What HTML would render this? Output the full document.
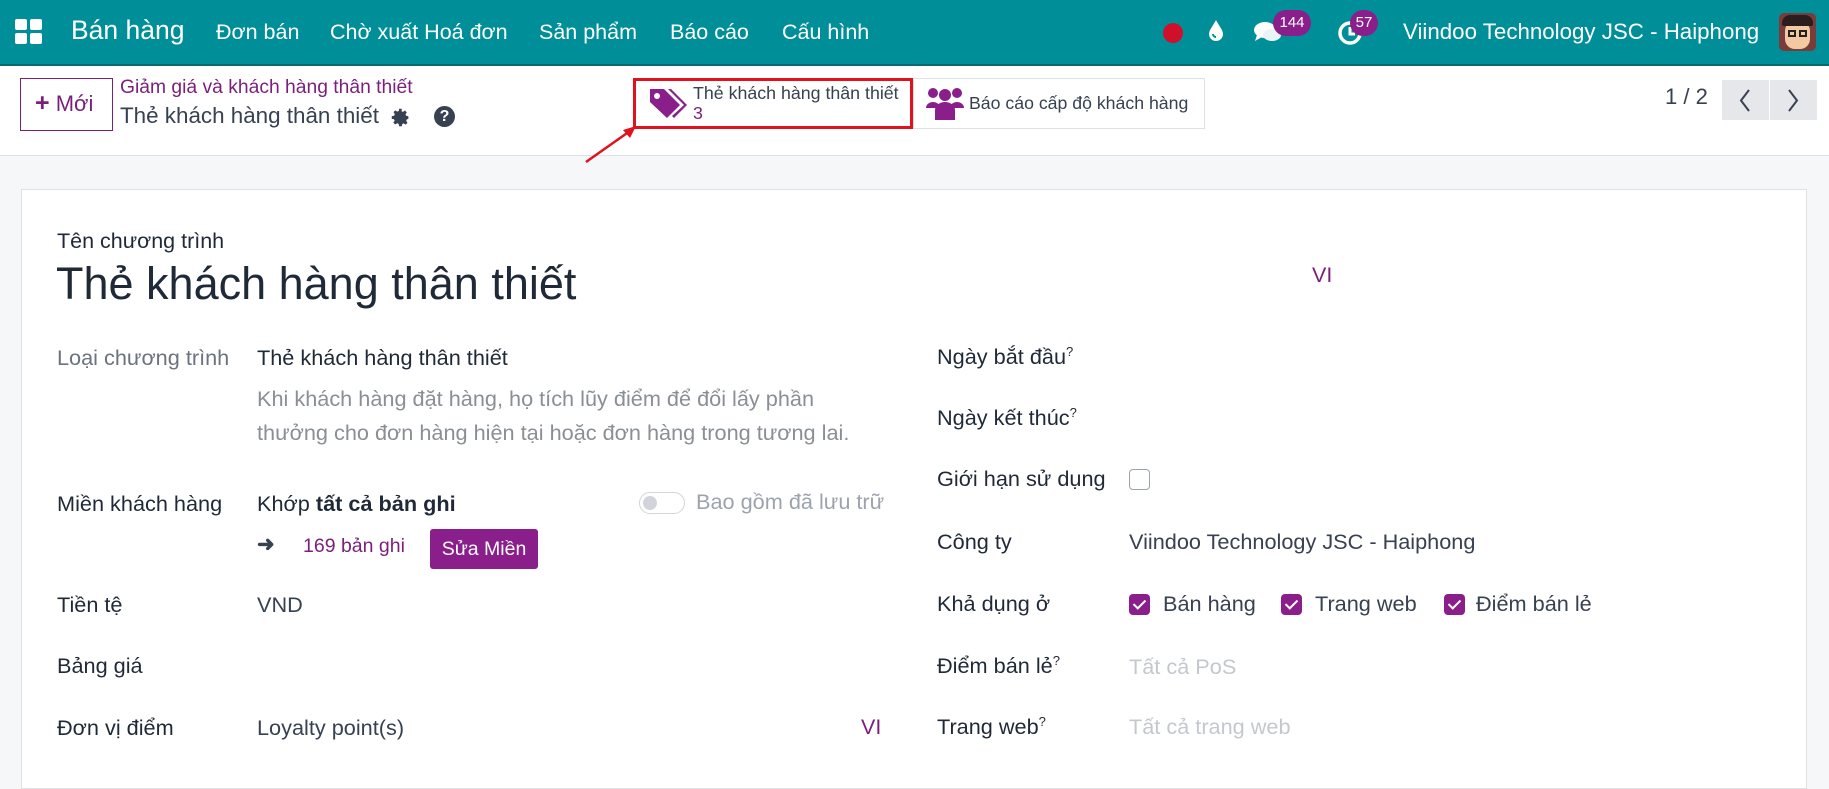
<!DOCTYPE html>
<html><head><meta charset="utf-8"><style>
*{box-sizing:border-box;margin:0;padding:0}
body{width:1829px;height:777px;overflow:hidden;background:#f6f7f9;font-family:"Liberation Sans",sans-serif;color:#374151;position:relative}
.a{position:absolute;white-space:nowrap}
.nav{position:absolute;left:0;top:0;width:1829px;height:66px;background:#008f98;border-bottom:2px solid #0a6a70}
.nav .a{color:#fff}
.cp{position:absolute;left:0;top:66px;width:1829px;height:90px;background:#fff;border-bottom:1px solid #dee2e6}
.sheet{position:absolute;left:21px;top:189px;width:1786px;height:600px;background:#fff;border:1px solid #dee2e6}
.f{font-size:21.7px}
.lab{color:#1f2937}
.pur{color:#7b1f7a}
.cb{position:absolute;width:21px;height:21px;border-radius:4px;background:#8a1e8a}
.cb:after{content:"";position:absolute;left:7px;top:3px;width:5px;height:10px;border:solid #fff;border-width:0 2px 2px 0;transform:rotate(45deg)}
</style></head><body>
<div class="nav">
 <svg class="a" style="left:15px;top:19px" width="29" height="27" viewBox="0 0 29 27"><rect x="0" y="0" width="12" height="11" rx="2" fill="#fff"/><rect x="15" y="0" width="12" height="11" rx="2" fill="#fff"/><rect x="0" y="14" width="12" height="11" rx="2" fill="#fff"/><rect x="15" y="14" width="12" height="11" rx="2" fill="#fff"/></svg>
 <div class="a" style="left:71px;top:15px;font-size:26.5px">Bán hàng</div>
 <div class="a" style="left:216px;top:20px;font-size:21.5px">Đơn bán</div>
 <div class="a" style="left:330px;top:20px;font-size:21.5px">Chờ xuất Hoá đơn</div>
 <div class="a" style="left:539px;top:20px;font-size:21.5px">Sản phẩm</div>
 <div class="a" style="left:670px;top:20px;font-size:21.5px">Báo cáo</div>
 <div class="a" style="left:782px;top:20px;font-size:21.5px">Cấu hình</div>
 <div class="a" style="left:1163px;top:23px;width:20px;height:20px;border-radius:50%;background:#d0102a"></div>
 <svg class="a" style="left:1207px;top:19px" width="18" height="24" viewBox="0 0 18 24"><path d="M9 1C6 7 2 11 2 15a7 7 0 0014 0C16 11 12 7 9 1z" fill="#fff"/><path d="M6 15a3 3 0 003 3" stroke="#008f98" stroke-width="2" fill="none"/></svg>
 <svg class="a" style="left:1253px;top:19px" width="30" height="28" viewBox="0 0 30 28"><ellipse cx="12" cy="11" rx="11" ry="8" fill="#fff"/><path d="M4 16l-2 6 7-4z" fill="#fff"/><ellipse cx="19" cy="16" rx="9" ry="6" fill="#e8f4f5"/></svg>
 <div class="a" style="left:1273px;top:10px;height:26px;min-width:38px;padding:0 5px;border-radius:13px;background:#8a1e8a;font-size:15px;line-height:26px;text-align:center">144</div>
 <svg class="a" style="left:1337px;top:19px" width="28" height="28" viewBox="0 0 28 28"><circle cx="13" cy="14" r="10" fill="none" stroke="#fff" stroke-width="3.5"/><path d="M13 8v7h5" stroke="#fff" stroke-width="3" fill="none"/></svg>
 <div class="a" style="left:1350px;top:10px;height:26px;min-width:28px;padding:0 4px;border-radius:13px;background:#8a1e8a;font-size:15px;line-height:26px;text-align:center">57</div>
 <div class="a" style="left:1403px;top:19px;font-size:22.3px">Viindoo Technology JSC - Haiphong</div>
 <div class="a" style="left:1779px;top:13px;width:37px;height:38px;border-radius:5px;background:#7a3b3b;overflow:hidden"><div style="position:absolute;left:6px;top:8px;width:25px;height:28px;border-radius:10px;background:#f2c9a0"></div><div style="position:absolute;left:3px;top:2px;width:31px;height:11px;border-radius:8px 8px 2px 2px;background:#2b1d1d"></div><div style="position:absolute;left:9px;top:17px;width:8px;height:7px;border:2px solid #222"></div><div style="position:absolute;left:20px;top:17px;width:8px;height:7px;border:2px solid #222"></div></div>
</div>
<div class="cp">
 <div class="a" style="left:20px;top:12px;width:93px;height:53px;border:1px solid #7b1f7a;background:#fff"></div>
 <div class="a" style="left:35px;top:23px;font-size:22px;color:#7b1f7a"><b style="font-size:25px">+</b> Mới</div>
 <div class="a pur" style="left:120px;top:11px;font-size:19.3px">Giảm giá và khách hàng thân thiết</div>
 <div class="a" style="left:120px;top:37px;font-size:22.4px;color:#374151">Thẻ khách hàng thân thiết</div>
 <svg class="a" style="left:390px;top:41px" width="21" height="21" viewBox="0 0 24 24"><path d="M12 8a4 4 0 100 8 4 4 0 000-8zm9 5.5v-3l-2.6-.5-.7-1.7 1.5-2.2-2.1-2.1-2.2 1.5-1.7-.7L13.5 2h-3l-.5 2.6-1.7.7-2.2-1.5-2.1 2.1 1.5 2.2-.7 1.7L2 10.5v3l2.6.5.7 1.7-1.5 2.2 2.1 2.1 2.2-1.5 1.7.7.7 2.8h3l.5-2.6 1.7-.7 2.2 1.5 2.1-2.1-1.5-2.2.7-1.7z" fill="#374151"/></svg>
 <div class="a" style="left:434px;top:40px;width:21px;height:21px;border-radius:50%;background:#374151;color:#fff;font-size:16px;font-weight:bold;text-align:center;line-height:21px">?</div>
 <div class="a" style="left:633px;top:12px;width:280px;height:51px;border:3px solid #e0121d;background:#fff"></div>
 <svg class="a" style="left:648px;top:21px" width="40" height="34" viewBox="0 0 40 34"><path d="M2 2h14l16 16-13 13L2 15z" fill="#8a1e8a"/><circle cx="9" cy="9" r="3" fill="#fff"/><path d="M20 2h3l16 16-13 13-2-2 12-11z" fill="#8a1e8a"/></svg>
 <div class="a" style="left:693px;top:17px;font-size:17.8px;color:#374151">Thẻ khách hàng thân thiết</div>
 <div class="a pur" style="left:693px;top:37px;font-size:17.8px">3</div>
 <div class="a" style="left:913px;top:12px;width:292px;height:51px;border:1px solid #dee2e6;background:#fff"></div>
 <svg class="a" style="left:925px;top:20px" width="40" height="36" viewBox="0 0 40 36"><circle cx="8" cy="7" r="5" fill="#8a1e8a"/><circle cx="32" cy="7" r="5" fill="#8a1e8a"/><circle cx="20" cy="9" r="6" fill="#8a1e8a"/><path d="M1 22a7 6 0 0114 0z" fill="#8a1e8a"/><path d="M25 22a7 6 0 0114 0z" fill="#8a1e8a"/><path d="M10 34V24a10 8 0 0120 0v10z" fill="#8a1e8a"/></svg>
 <div class="a" style="left:969px;top:27px;font-size:17.7px;color:#374151">Báo cáo cấp độ khách hàng</div>
 <div class="a" style="left:1665px;top:18px;font-size:22px;color:#374151">1 / 2</div>
 <div class="a" style="left:1722px;top:14px;width:47px;height:40px;background:#e5e7eb"></div>
 <div class="a" style="left:1770px;top:14px;width:47px;height:40px;background:#e5e7eb"></div>
 <svg class="a" style="left:1737px;top:22px" width="16" height="25"><path d="M12 2L4 12.5 12 23" stroke="#374151" stroke-width="2" fill="none"/></svg>
 <svg class="a" style="left:1785px;top:22px" width="16" height="25"><path d="M4 2l8 10.5L4 23" stroke="#374151" stroke-width="2" fill="none"/></svg>
</div>
<svg class="a" style="left:580px;top:122px" width="60" height="45"><path d="M6 40L50 9" stroke="#e0121d" stroke-width="2.5"/><path d="M56 4L43 8l7 8z" fill="#e0121d"/></svg>
<div class="sheet"></div>
<div class="a" style="left:57px;top:229px;font-size:21.5px;color:#1f2937">Tên chương trình</div>
<div class="a" style="left:56px;top:258px;font-size:45px;color:#1f2937">Thẻ khách hàng thân thiết</div>
<div class="a pur" style="left:1312px;top:263px;font-size:21.5px">VI</div>

<div class="a f" style="left:57px;top:345px;color:#6b7280">Loại chương trình</div>
<div class="a f" style="left:257px;top:345px;color:#1f2937">Thẻ khách hàng thân thiết</div>
<div class="a f" style="left:257px;top:386px;color:#8a8f96">Khi khách hàng đặt hàng, họ tích lũy điểm để đổi lấy phần</div>
<div class="a f" style="left:257px;top:420px;color:#8a8f96">thưởng cho đơn hàng hiện tại hoặc đơn hàng trong tương lai.</div>

<div class="a f lab" style="left:57px;top:491px">Miền khách hàng</div>
<div class="a f" style="left:257px;top:491px;color:#1f2937">Khớp <b>tất cả bản ghi</b></div>
<div class="a" style="left:639px;top:492px;width:46px;height:22px;border:1px solid #d1d5db;border-radius:11px"><div style="position:absolute;left:3px;top:3px;width:14px;height:14px;border-radius:50%;background:#d1d5db"></div></div>
<div class="a f" style="left:696px;top:489px;color:#9ca3af">Bao gồm đã lưu trữ</div>
<div class="a" style="left:257px;top:532px;font-size:21px;color:#374151;font-weight:bold">➜</div>
<div class="a pur" style="left:303px;top:535px;font-size:19.5px">169 bản ghi</div>
<div class="a" style="left:430px;top:529px;width:108px;height:40px;border-radius:3px;background:#8a1e8a;color:#fff;font-size:19.5px;line-height:40px;text-align:center">Sửa Miền</div>

<div class="a f lab" style="left:57px;top:592px">Tiền tệ</div>
<div class="a f" style="left:257px;top:592px">VND</div>
<div class="a f lab" style="left:57px;top:653px">Bảng giá</div>
<div class="a f lab" style="left:57px;top:715px">Đơn vị điểm</div>
<div class="a f" style="left:257px;top:715px">Loyalty point(s)</div>
<div class="a pur" style="left:861px;top:715px;font-size:21.5px">VI</div>

<div class="a f lab" style="left:937px;top:344px">Ngày bắt đầu<sup style="font-size:13px">?</sup></div>
<div class="a f lab" style="left:937px;top:405px">Ngày kết thúc<sup style="font-size:13px">?</sup></div>
<div class="a f lab" style="left:937px;top:466px">Giới hạn sử dụng</div>
<div class="a" style="left:1129px;top:469px;width:21px;height:21px;border:1px solid #9ca3af;border-radius:4px"></div>
<div class="a f lab" style="left:937px;top:529px">Công ty</div>
<div class="a f" style="left:1129px;top:529px">Viindoo Technology JSC - Haiphong</div>
<div class="a f lab" style="left:937px;top:591px">Khả dụng ở</div>
<div class="cb" style="left:1129px;top:594px"></div><div class="a f" style="left:1163px;top:591px">Bán hàng</div>
<div class="cb" style="left:1281px;top:594px"></div><div class="a f" style="left:1315px;top:591px">Trang web</div>
<div class="cb" style="left:1444px;top:594px"></div><div class="a f" style="left:1476px;top:591px">Điểm bán lẻ</div>
<div class="a f lab" style="left:937px;top:653px">Điểm bán lẻ<sup style="font-size:13px">?</sup></div>
<div class="a f" style="left:1129px;top:654px;color:#c4c8ce">Tất cả PoS</div>
<div class="a f lab" style="left:937px;top:714px">Trang web<sup style="font-size:13px">?</sup></div>
<div class="a f" style="left:1129px;top:714px;color:#c4c8ce">Tất cả trang web</div>
</body></html>
